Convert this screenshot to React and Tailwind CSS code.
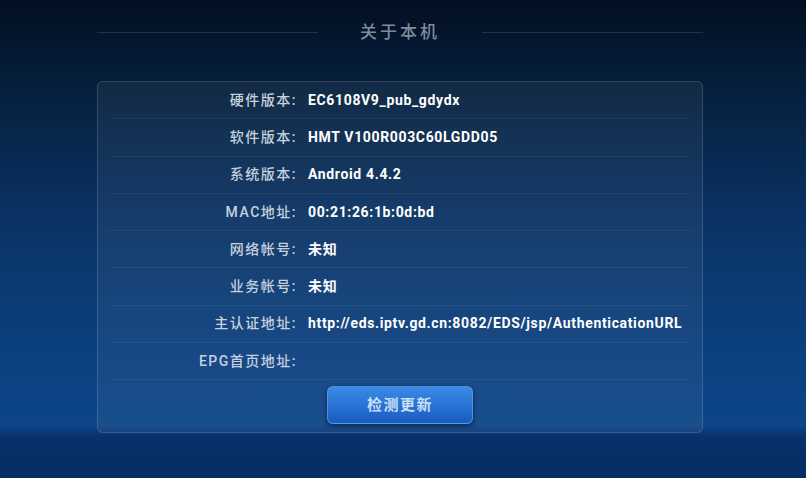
import React from "react";

const rows = [
  { label: "硬件版本:", value: "EC6108V9_pub_gdydx" },
  { label: "软件版本:", value: "HMT V100R003C60LGDD05" },
  { label: "系统版本:", value: "Android 4.4.2" },
  { label: "MAC地址:", value: "00:21:26:1b:0d:bd" },
  { label: "网络帐号:", value: "未知" },
  { label: "业务帐号:", value: "未知" },
  { label: "主认证地址:", value: "http://eds.iptv.gd.cn:8082/EDS/jsp/AuthenticationURL" },
  { label: "EPG首页地址:", value: "" },
];

const font = "font-['Roboto','Noto_Sans_CJK_SC',sans-serif]";

export default function App() {
  return (
    <div
      className={`w-[806px] h-[478px] overflow-hidden ${font} bg-[linear-gradient(180deg,#030f21_0%,#06213f_20%,#0a3467_48%,#0c4080_75%,#0d4587_89%,#07316b_91.5%,#062d63_100%)]`}
    >
      {/* title */}
      <div className="ml-[97px] w-[606px] pt-[20px] h-[44px] flex items-center">
        <div className="flex-1 h-px bg-white/[0.12]" />
        <div className="w-[164px] text-center text-[17px] tracking-[3px] text-[#7f8c9b] font-medium leading-[24px]">
          关于本机
        </div>
        <div className="flex-1 h-px bg-white/[0.12]" />
      </div>

      {/* info panel */}
      <div className="ml-[97px] mt-[37px] w-[606px] rounded-md border border-white/[0.14] bg-white/[0.05] pb-[8px] flex flex-col">
        <div className="px-3">
          {rows.map((row) => (
            <div
              key={row.label}
              className="h-[37.3px] flex items-center border-b border-white/[0.055]"
            >
              <div className="w-[187px] text-right text-[14px] tracking-[1.5px] text-[#c6d1dd] font-medium whitespace-nowrap">
                {row.label}
              </div>
              <div className="ml-[11px] text-[14px] tracking-[0.65px] text-white font-bold whitespace-nowrap">
                {row.value}
              </div>
            </div>
          ))}
        </div>
        <button className="mx-auto mt-[6px] w-[146px] h-[38px] rounded-md border border-[#5ea3f0]/70 bg-[linear-gradient(180deg,#3a8be6_0%,#2b75d6_45%,#1a5bbf_100%)] shadow-[0_2px_4px_rgba(0,10,30,0.6)] text-[15px] tracking-[1.5px] font-bold text-[#cbdff5]">
          检测更新
        </button>
      </div>
    </div>
  );
}
